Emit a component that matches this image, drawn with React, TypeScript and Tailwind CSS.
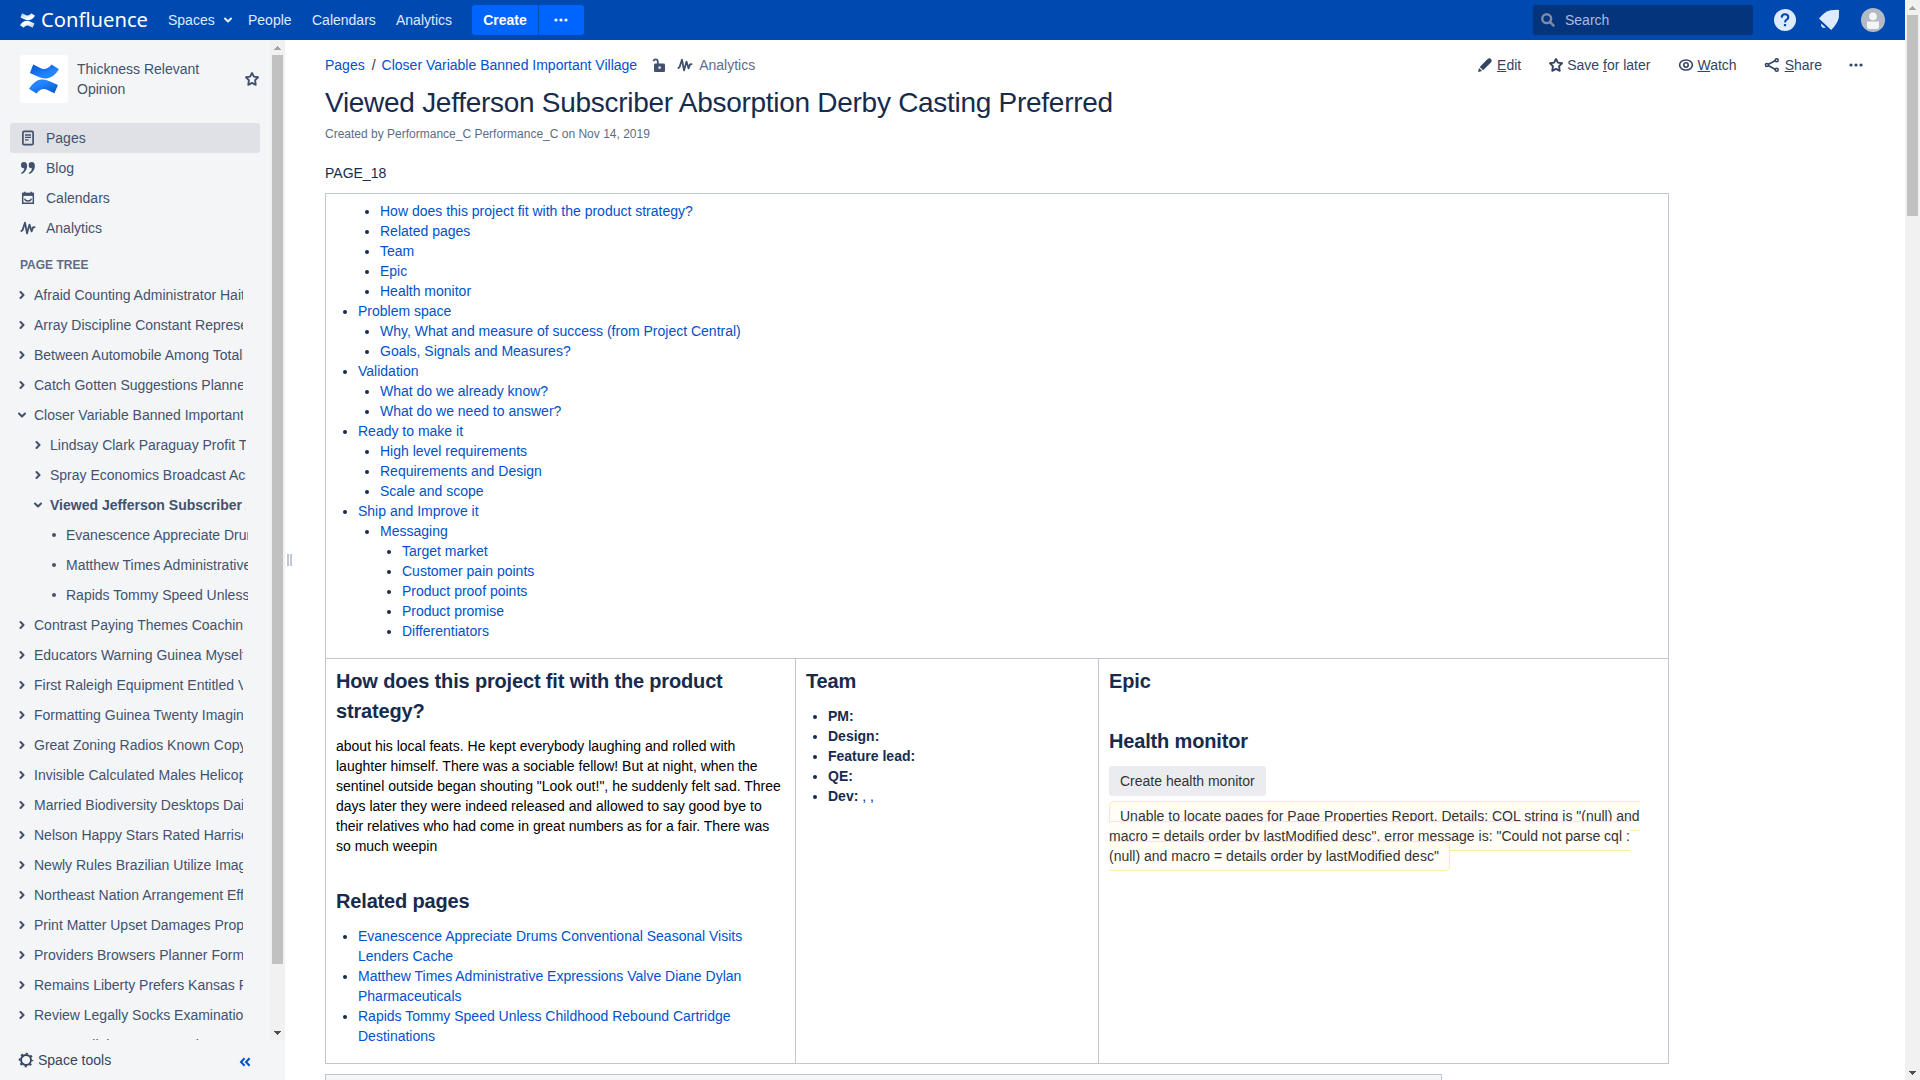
import React from "react";

const link = "text-[#0052cc]";

function Chevron({ down = false }: { down?: boolean }) {
  return (
    <svg width="10" height="10" viewBox="0 0 10 10" fill="none" stroke="currentColor" strokeWidth="2.1" strokeLinecap="round" strokeLinejoin="round">
      {down ? <path d="M2 3.5 5 6.5 8 3.5" /> : <path d="M3.500 2 6.500 5 3.500 8" />}
    </svg>
  );
}

function Star() {
  return (
    <svg width="16" height="16" viewBox="0 0 16 16" fill="none" stroke="currentColor" strokeWidth="1.9" strokeLinejoin="round">
      <path d="M8 2 9.9 5.6 14 6.3 11.1 9.2 11.7 13.8 8 11.9 4.3 13.8 4.9 9.2 2 6.3 6.1 5.6z" />
    </svg>
  );
}

function Pulse() {
  return (
    <svg width="16" height="16" viewBox="0 0 16 16" fill="none" stroke="currentColor" strokeWidth="1.8" strokeLinecap="round" strokeLinejoin="round">
      <path d="M1.3 11 2.5 10.2 5 2.6 7 13.4 9.5 4.6 11.6 11.4 13 7.4 14.6 7.2" />
    </svg>
  );
}

function Dots() {
  return (
    <svg width="16" height="16" viewBox="0 0 16 16" fill="currentColor">
      <circle cx="3" cy="8" r="1.6" />
      <circle cx="8" cy="8" r="1.6" />
      <circle cx="13" cy="8" r="1.6" />
    </svg>
  );
}

function Mark({ size, from, to, id }: { size: number; from: string; to: string; id: string }) {
  return (
    <svg width={size} height={size} viewBox="0 0 30 30">
      <defs>
        <linearGradient id={id + "a"} x1="0" y1="0" x2="0.6" y2="0.7">
          <stop offset="0" stopColor={from} />
          <stop offset="1" stopColor={to} />
        </linearGradient>
        <linearGradient id={id + "b"} x1="1" y1="1" x2="0.4" y2="0.3">
          <stop offset="0" stopColor={from} />
          <stop offset="1" stopColor={to} />
        </linearGradient>
      </defs>
      <path fill={`url(#${id}a)`} d="M4.2.5 12.4 4.4Q15.4 5.7 18.5 4Q21 2.4 22.6.4L30 5.3Q24.8 13.6 17.5 14.4Q13.5 14.8 8.5 12.4L.9 8.9z" />
      <path fill={`url(#${id}b)`} d="M25.4 29.3 17.4 25.6Q14.3 24.2 11.2 26Q9 27.4 7.4 29.5L0 24.7Q5.5 16.3 12.3 15.5Q16 15 21.2 17.5L29 21z" />
    </svg>
  );
}

function ScrollArrow({ down = false }: { down?: boolean }) {
  return (
    <div className="flex h-[15px] w-[15px] items-center justify-center">
      <svg width="7" height="4" viewBox="0 0 7 4" shapeRendering="crispEdges" fill={down ? "#505050" : "#a3a3a3"}>
        {down ? <path d="M0 0H7V1H6V2H5V3H4V4H3V3H2V2H1V1H0z" /> : <path d="M0 4H7V3H6V2H5V1H4V0H3V1H2V2H1V3H0z" />}
      </svg>
    </div>
  );
}

function Header() {
  return (
    <header className="flex h-10 shrink-0 items-center bg-[#0049b0] text-[#deebff]">
      <div className="ml-5 flex w-[148px] items-center">
        <Mark size={15} from="#a9c3e8" to="#ffffff" id="hdr" />
        <svg className="ml-[5px]" width="112" height="30" viewBox="0 0 112 30">
          <text x="1" y="21.500" fill="#fff" fontFamily="Noto Sans, sans-serif" fontSize="20.500" textLength="107" lengthAdjust="spacingAndGlyphs">Confluence</text>
        </svg>
      </div>
      <div className="flex w-20 items-center">
        <span>Spaces</span>
        <span className="ml-2 flex text-[#deebff]"><Chevron down /></span>
      </div>
      <span className="w-16">People</span>
      <span className="w-[84px]">Calendars</span>
      <span className="w-[76px]">Analytics</span>
      <div className="flex h-[30px] gap-px font-bold text-white">
        <div className="flex w-[66px] items-center justify-center rounded-l-[3px] bg-[#0065ff]">Create</div>
        <div className="flex w-[45px] items-center justify-center rounded-r-[3px] bg-[#0065ff] pr-px"><Dots /></div>
      </div>
      <div className="ml-auto flex h-[30px] w-[220px] items-center rounded-[3px] bg-[#04347c] pl-2 text-[#a9bddd]">
        <svg width="14" height="14" viewBox="0 0 14 14" fill="none" stroke="#7f8aa3" strokeWidth="2.5">
          <circle cx="5.700" cy="5.700" r="4.400" />
          <path d="M8.800 8.800 13.200 13.200" />
        </svg>
        <span className="ml-2.5">Search</span>
      </div>
      <svg className="ml-[21px]" width="22" height="22" viewBox="0 0 22 22">
        <circle cx="11" cy="11" r="11" fill="#deebff" />
        <path d="M7.7 8.6Q7.8 5.3 11 5.3T14.3 8.2Q14.3 9.7 12.7 10.7T11 13.4" fill="none" stroke="#0049b0" strokeWidth="2.1" />
        <rect x="9.9" y="15" width="2.2" height="2.2" fill="#0049b0" />
      </svg>
      <svg className="ml-[22px]" width="22" height="22" viewBox="0 0 22 22" fill="#deebff">
        <path d="M1 9.500Q6.500 2.500 12.500 1.200L20 .8Q21 .8 21 1.800L20.900 8.500Q19.500 14.500 13.200 21z" />
        <path d="M3.200 14.600 7.600 18.600Q5.800 19.600 4.200 18.300T3.200 14.600z" />
      </svg>
      <svg className="ml-[21px] mr-5" width="24" height="24" viewBox="0 0 24 24">
        <circle cx="12" cy="12" r="12" fill="#b3bac5" />
        <circle cx="12" cy="8.4" r="3.8" fill="#f4f5f7" />
        <path d="M6 13.4H18V18.5Q18 21 15.5 21H8.5Q6 21 6 18.5z" fill="#f4f5f7" />
      </svg>
    </header>
  );
}

type Node = { text: string; level: number; kind: "closed" | "open" | "leaf"; bold?: boolean };
const tree: Node[] = [
  { text: "Afraid Counting Administrator Haiti", level: 0, kind: "closed" },
  { text: "Array Discipline Constant Represented", level: 0, kind: "closed" },
  { text: "Between Automobile Among Totals", level: 0, kind: "closed" },
  { text: "Catch Gotten Suggestions Planned", level: 0, kind: "closed" },
  { text: "Closer Variable Banned Important Village", level: 0, kind: "open" },
  { text: "Lindsay Clark Paraguay Profit Tree", level: 1, kind: "closed" },
  { text: "Spray Economics Broadcast Acid", level: 1, kind: "closed" },
  { text: "Viewed Jefferson Subscriber Absorption", level: 1, kind: "open", bold: true },
  { text: "Evanescence Appreciate Drums Conventional", level: 2, kind: "leaf" },
  { text: "Matthew Times Administrative Expressions", level: 2, kind: "leaf" },
  { text: "Rapids Tommy Speed Unless Childhood", level: 2, kind: "leaf" },
  { text: "Contrast Paying Themes Coaching", level: 0, kind: "closed" },
  { text: "Educators Warning Guinea Myself", level: 0, kind: "closed" },
  { text: "First Raleigh Equipment Entitled Vast", level: 0, kind: "closed" },
  { text: "Formatting Guinea Twenty Imaging", level: 0, kind: "closed" },
  { text: "Great Zoning Radios Known Copying", level: 0, kind: "closed" },
  { text: "Invisible Calculated Males Helicopter", level: 0, kind: "closed" },
  { text: "Married Biodiversity Desktops Daily", level: 0, kind: "closed" },
  { text: "Nelson Happy Stars Rated Harrison", level: 0, kind: "closed" },
  { text: "Newly Rules Brazilian Utilize Images", level: 0, kind: "closed" },
  { text: "Northeast Nation Arrangement Efforts", level: 0, kind: "closed" },
  { text: "Print Matter Upset Damages Property", level: 0, kind: "closed" },
  { text: "Providers Browsers Planner Forms", level: 0, kind: "closed" },
  { text: "Remains Liberty Prefers Kansas Poet", level: 0, kind: "closed" },
  { text: "Review Legally Socks Examination", level: 0, kind: "closed" },
  { text: "Spam Collabs Across Casino", level: 0, kind: "closed" },
];
const indent = ["pl-[17px]", "pl-[33px]", "pl-[49px]"];
const clip = ["w-[209px]", "w-[196px]", "w-[182px]"];

function Sidebar() {
  const nav = [
    { label: "Pages", icon: (
      <svg width="16" height="16" viewBox="0 0 16 16" fill="none" stroke="currentColor" strokeWidth="1.7"><rect x="2.9" y="1.4" width="10.2" height="13.2" rx="1.2" /><path d="M5 5H11M5 7.4H11M5 9.8H8.6" strokeWidth="1.3" /></svg>
    ) },
    { label: "Blog", icon: (
      <svg width="16" height="16" viewBox="0 0 16 16" fill="currentColor"><path d="M1 5.2A3 3.1 0 0 1 4 2C6.200 2 7.100 3.600 7.100 5.700C7.100 9.500 5 12.700 1.700 14L1 13C3 11.900 4.100 10.200 4.300 8.200A3 3 0 0 1 1 5.200zM8.700 5.200A3 3.100 0 0 1 11.700 2C13.900 2 14.900 3.600 14.900 5.700C14.900 9.500 12.700 12.700 9.400 14L8.700 13C10.700 11.900 11.800 10.200 12 8.200A3 3 0 0 1 8.700 5.200z" /></svg>
    ) },
    { label: "Calendars", icon: (
      <svg width="16" height="16" viewBox="0 0 16 16" fill="none" stroke="currentColor" strokeWidth="1.5"><path d="M2.700 3.500H13.300V13.300H2.700z" /><path d="M2 4.400H14" strokeWidth="3" /><path d="M4.700 1.800V4M11.300 1.800V4" strokeWidth="1.800" /><path d="M4.600 8.700Q5 11 8 11T11.400 8.700" strokeWidth="1.300" /></svg>
    ) },
    { label: "Analytics", icon: <Pulse /> },
  ];
  return (
    <aside className="flex w-[285px] shrink-0 flex-col bg-[#f4f5f7] text-[#42526e]">
      <div className="flex h-[1000px] overflow-hidden">
        <div className="w-[270px] shrink-0 pt-[15px]">
          <div className="flex h-12 items-center pl-5">
            <div className="flex h-12 w-12 items-center justify-center rounded-[3px] bg-white"><Mark size={30} from="#0052cc" to="#2684ff" id="space" /></div>
            <div className="ml-[9px] w-[160px] leading-5">Thickness Relevant<br />Opinion</div>
            <span className="ml-[7px]"><Star /></span>
          </div>
          <nav className="mt-5 ml-2.5 w-[250px]">
            {nav.map((n, i) => (
              <div key={n.label} className={i === 0 ? "flex h-[30px] items-center gap-2.5 rounded-[3px] bg-[#dfe1e6] pl-2.5" : "flex h-[30px] items-center gap-2.5 pl-2.5"}>
                {n.icon}
                <span>{n.label}</span>
              </div>
            ))}
          </nav>
          <h2 className="mt-3 pl-5 text-xs leading-5 font-bold text-[#5e6c84]">PAGE TREE</h2>
          <div className="mt-[5px]">
            {tree.map((n) => (
              <div key={n.text} className={`flex h-[30px] items-center ${indent[n.level]}`}>
                <span className="flex w-[17px] shrink-0">
                  {n.kind === "leaf" ? <svg width="10" height="10" viewBox="0 0 10 10" fill="currentColor"><circle cx="5" cy="5" r="2" /></svg> : <Chevron down={n.kind === "open"} />}
                </span>
                <span className={`overflow-hidden whitespace-nowrap leading-5 ${clip[n.level]} ${n.bold ? "font-bold" : ""}`}>{n.text}</span>
              </div>
            ))}
          </div>
        </div>
        <div className="flex w-[15px] shrink-0 flex-col bg-[#f1f1f1]">
          <ScrollArrow />
          <div className="ml-0.5 h-[909px] w-[11px] bg-[#c1c1c1]" />
          <div className="mt-auto"><ScrollArrow down /></div>
        </div>
      </div>
      <div className="flex h-10 items-center pl-[18px] text-[#344563]">
        <svg width="16" height="16" viewBox="0 0 16 16" fill="none" stroke="currentColor"><circle cx="8" cy="8" r="5" strokeWidth="1.900" /><circle cx="8" cy="8" r="6.400" strokeWidth="1.800" strokeDasharray="2.200 2.826" strokeDashoffset="1.100" /></svg>
        <span className="ml-1">Space tools</span>
        <svg className="mt-1 mr-[34px] ml-auto" width="12" height="10" viewBox="0 0 12 10" fill="none" stroke="#0052cc" strokeWidth="2"><path d="M5.600 1.200 2 5 5.600 8.800M10.600 1.200 7 5 10.600 8.800" /></svg>
      </div>
    </aside>
  );
}

function Toolbar() {
  return (
    <div className="flex h-[50px] items-center">
      <span className={link}>Pages</span>
      <span className="mr-1.5 ml-[7px] text-[#333]">/</span>
      <span className={link}>Closer Variable Banned Important Village</span>
      <svg className="ml-[14px] text-[#42526e]" width="16" height="16" viewBox="0 0 16 16" fill="none">
        <rect x="3" y="6.500" width="11" height="8.500" rx="1.300" fill="currentColor" />
        <path d="M6.800 7V4.200A2.200 2.200 0 0 0 2.500 4.200" stroke="currentColor" strokeWidth="1.800" />
        <rect x="7.500" y="9.500" width="2.200" height="2.200" fill="#fff" />
      </svg>
      <span className="ml-2.5 text-[#42526e]"><Pulse /></span>
      <span className="ml-1.5 text-[#5e6c84]">Analytics</span>
      <div className="mr-[41px] ml-auto flex items-center text-[#344563]">
        <svg width="16" height="16" viewBox="0 0 16 16" fill="currentColor"><path d="M1 15 2 10.900 5.100 14zM2.800 9.900 10.600 2.100Q12.300.400 14 2T13.900 5.400L6.100 13.200z" /></svg>
        <span className="ml-1"><u>E</u>dit</span>
        <span className="ml-[27px]"><Star /></span>
        <span className="ml-[3px]">Save <u>f</u>or later</span>
        <svg className="ml-7" width="16" height="16" viewBox="0 0 16 16" fill="none" stroke="currentColor" strokeWidth="1.600"><ellipse cx="8" cy="8" rx="6.400" ry="5" /><circle cx="8" cy="8" r="2.200" /></svg>
        <span className="ml-[3px]"><u>W</u>atch</span>
        <svg className="ml-[27px]" width="16" height="16" viewBox="0 0 16 16" fill="none" stroke="currentColor" strokeWidth="1.600"><path d="M12 3.300 3.200 8 12 12.700" /><circle cx="2.900" cy="8" r="1.500" fill="#fff" /><circle cx="12.700" cy="3.200" r="1.500" fill="#fff" /><circle cx="12.700" cy="12.800" r="1.500" fill="#fff" /></svg>
        <span className="ml-[5px]"><u>S</u>hare</span>
        <span className="ml-[26px]"><Dots /></span>
      </div>
    </div>
  );
}

type Toc = { t: string; c?: Toc[] };
const toc: Toc[] = [
  { t: "Problem space", c: [{ t: "Why, What and measure of success (from Project Central)" }, { t: "Goals, Signals and Measures?" }] },
  { t: "Validation", c: [{ t: "What do we already know?" }, { t: "What do we need to answer?" }] },
  { t: "Ready to make it", c: [{ t: "High level requirements" }, { t: "Requirements and Design" }, { t: "Scale and scope" }] },
  { t: "Ship and Improve it", c: [{ t: "Messaging", c: [{ t: "Target market" }, { t: "Customer pain points" }, { t: "Product proof points" }, { t: "Product promise" }, { t: "Differentiators" }] }] },
];
const intro: Toc[] = ["How does this project fit with the product strategy?", "Related pages", "Team", "Epic", "Health monitor"].map((t) => ({ t }));

function TocList({ items }: { items: Toc[] }) {
  return (
    <ul className="list-disc pl-[22px]">
      {items.map((i) => (
        <li key={i.t}>
          <span className={link}>{i.t}</span>
          {i.c && <TocList items={i.c} />}
        </li>
      ))}
    </ul>
  );
}

const h2 = "text-xl leading-[30px] font-bold tracking-[-0.008em]";

export default function App() {
  return (
    <div className="flex h-[1080px] w-[1920px] overflow-hidden bg-white font-['Liberation_Sans',Arial,sans-serif] text-sm leading-5 text-[#172b4d]">
      <div className="flex w-[1905px] shrink-0 flex-col">
        <Header />
        <div className="flex h-[1040px]">
          <Sidebar />
          <div className="flex w-10 shrink-0 items-center gap-px pl-0.5">
            <div className="h-3 w-0.5 bg-[#c1c7d0]" />
            <div className="h-3 w-0.5 bg-[#c1c7d0]" />
          </div>
          <main className="h-[1040px] flex-1 overflow-hidden">
            <Toolbar />
            <h1 className="text-[28px] leading-[26px] tracking-[-0.01em]">Viewed Jefferson Subscriber Absorption Derby Casting Preferred</h1>
            <p className="mt-2 text-xs leading-5 text-[#5e6c84]">Created by Performance_C Performance_C on Nov 14, 2019</p>
            <p className="mt-[19px]">PAGE_18</p>
            <div className="mt-2.5 w-[1344px] border border-[#c1c7d0]">
              <div className="h-[464px] px-2.5 py-[7px]">
                <div className="pl-[22px]"><TocList items={intro} /></div>
                <TocList items={toc} />
              </div>
              <div className="flex h-[405px] border-t border-[#c1c7d0]">
                <section className="w-[469px] px-2.5 pt-[7px]">
                  <h2 className={h2}>How does this project fit with the product strategy?</h2>
                  <p className="mt-2.5 text-black">about his local feats. He kept everybody laughing and rolled with laughter himself. There was a sociable fellow! But at night, when the sentinel outside began shouting "Look out!", he suddenly felt sad. Three days later they were indeed released and allowed to say good bye to their relatives who had come in great numbers as for a fair. There was so much weepin</p>
                  <h2 className={`mt-[30px] ${h2}`}>Related pages</h2>
                  <div className="mt-2.5">
                    <TocList items={[{ t: "Evanescence Appreciate Drums Conventional Seasonal Visits Lenders Cache" }, { t: "Matthew Times Administrative Expressions Valve Diane Dylan Pharmaceuticals" }, { t: "Rapids Tommy Speed Unless Childhood Rebound Cartridge Destinations" }]} />
                  </div>
                </section>
                <section className="w-[303px] border-l border-[#c1c7d0] px-2.5 pt-[7px]">
                  <h2 className={h2}>Team</h2>
                  <ul className="mt-2.5 list-disc pl-[22px]">
                    <li><b>PM:</b></li>
                    <li><b>Design:</b></li>
                    <li><b>Feature lead:</b></li>
                    <li><b>QE:</b></li>
                    <li><b>Dev:</b> , ,</li>
                  </ul>
                </section>
                <section className="w-[570px] border-l border-[#c1c7d0] px-2.5 pt-[7px]">
                  <h2 className={h2}>Epic</h2>
                  <h2 className={`mt-[30px] ${h2}`}>Health monitor</h2>
                  <div className="mt-2.5 flex h-[30px] w-[157px] items-center rounded-[3px] bg-[#ebecf0] pl-[11px] text-[#333]">Create health monitor</div>
                  <p className="mt-2.5"><span className="rounded-[5px] border border-[#ffeaae] bg-[#fffdf6] px-2.5 py-1.5 text-[#333]">Unable to locate pages for Page Properties Report. Details: COL string is "(null) and macro = details order by lastModified desc". error message is: "Could not parse cql : (null) and macro = details order by lastModified desc"</span></p>
                </section>
              </div>
            </div>
            <div className="mt-2.5 h-10 w-[1117px] border border-[#c1c7d0] bg-[#f4f5f7]" />
          </main>
        </div>
      </div>
      <div className="flex w-[15px] shrink-0 flex-col bg-[#f1f1f1]">
        <ScrollArrow />
        <div className="ml-0.5 h-[201px] w-[11px] bg-[#c1c1c1]" />
        <div className="mt-auto"><ScrollArrow down /></div>
      </div>
    </div>
  );
}
